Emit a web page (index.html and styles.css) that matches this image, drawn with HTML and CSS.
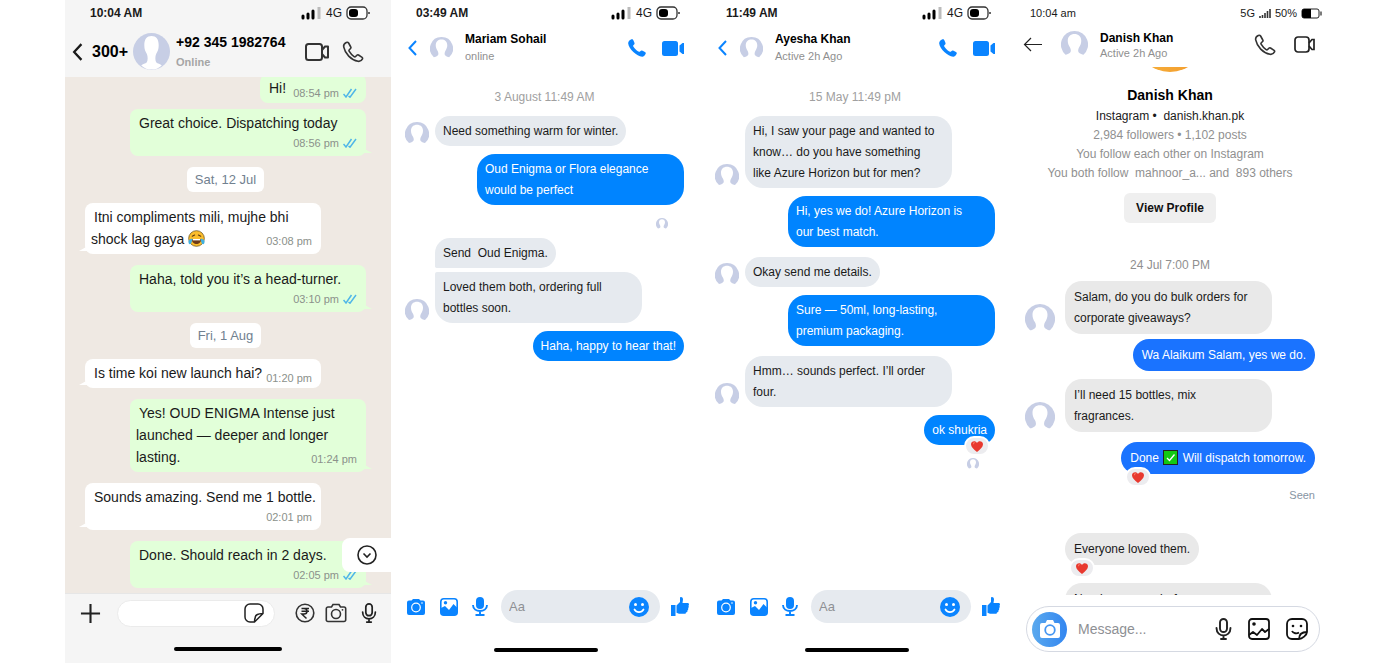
FILE: index.html
```html
<!DOCTYPE html>
<html lang="en">
<head>
    <meta charset="UTF-8">
    <meta name="viewport" content="width=device-width, initial-scale=1.0">
    <title>Customer chats</title>
    <link rel="stylesheet" href="styles.css">
</head>
<body>
    <svg class="sprite" aria-hidden="true">
        <symbol id="avatar" viewBox="0 0 36 36">
            <path fill="#c7cee5" d="M18 0A18 18 0 0 0 6 31.500c2 0 4-1 6-2.500 2-2 1-5 0-7-2-3-3-6-3-9 0-6 4-9 9-9s9 3 9 9c0 3-1 6-3 9-1 2-2 5 0 7 2 1.500 4 2.500 6 2.500A18 18 0 0 0 18 0z"/>
        </symbol>
        <symbol id="signal" viewBox="0 0 21 14">
            <path d="M2 10v2M7 8v4M12 5v7" stroke="#000" stroke-width="3" stroke-linecap="round"/>
            <path d="M18 1v12" stroke="#bbb" stroke-width="3"/>
        </symbol>
        <symbol id="battery" viewBox="0 0 25 14">
            <rect x="1" y="1" width="20" height="12" rx="4" fill="#fff" stroke="#333" stroke-width="1.3"/>
            <rect x="3" y="3" width="9" height="8" rx="3"/>
            <path d="M23 6v2" stroke="#333" stroke-width="1.5"/>
        </symbol>
        <symbol id="phone-line" viewBox="0 0 24 24">
            <path fill="none" stroke="#333" stroke-width="1.6" stroke-linejoin="round" d="M5.300 2.500c-1.700.8-3 2.300-2.600 4.400C4 13.500 10 20 17 21.300c2 .3 3.700-.8 4.500-2.400.3-.6.1-1.200-.4-1.600l-3.600-2.300c-.5-.3-1.100-.2-1.500.2l-1.400 1.300c-.4.400-1 .4-1.500.1-2-1.400-3.800-3.300-5-5.400-.3-.5-.2-1 .2-1.400L9.600 8.500c.4-.4.500-1 .2-1.500L7.600 3c-.5-.7-1.400-.9-2.300-.5z"/>
        </symbol>
        <symbol id="video-line" viewBox="0 0 26 20">
            <g fill="none" stroke="#333" stroke-width="2" stroke-linejoin="round">
                <rect x="2" y="2" width="16" height="16" rx="2.500"/>
                <path d="M18 8l3-3.500h3v11h-3L18 12"/>
            </g>
        </symbol>
        <symbol id="phone-solid" viewBox="0 0 18 18">
            <path fill="#0a84ff" d="M1 2C2 .7 3.500 0 4.600.2 5.200.4 6.600 3.800 6.600 4.500c0 .9-1.400 1.500-1.500 2.300-.1 1.300 4.500 6 6 6 .9 0 1.500-1.400 2.500-1.400.8 0 4 1.700 4.200 2.400.3 1-1.400 3.700-3.300 3.900C9.500 18.200.6 10 .2 4.600.1 3.600.4 2.700 1 2z"/>
        </symbol>
        <symbol id="video-solid" viewBox="0 0 22 15">
            <rect width="16" height="15" rx="2.500" fill="#0a84ff"/>
            <path fill="#0a84ff" d="M17.500 4.500L20.500 2H22v11h-1.500l-3-2.500z"/>
        </symbol>
        <symbol id="chevron" viewBox="0 0 9 16">
            <path d="M8 1L1.500 8 8 15" fill="none" stroke="currentColor" stroke-width="2"/>
        </symbol>
        <symbol id="ticks" viewBox="0 0 14 10">
            <path d="M.5 6L3 9l5.500-8M5.500 8L7 9.200 13 1" fill="none" stroke="#4fb6e8" stroke-width="1.500"/>
        </symbol>
        <symbol id="camera-solid" viewBox="0 0 18 16">
            <path fill="#0a84ff" d="M2 1.500h2.500L6 0h6l1.500 1.500H16a2 2 0 0 1 2 2V14a2 2 0 0 1-2 2H2a2 2 0 0 1-2-2V3.500a2 2 0 0 1 2-2z"/>
            <circle cx="9" cy="8.500" r="4.300" fill="none" stroke="#fff" stroke-width="1.200"/>
            <circle cx="15" cy="4" r=".8" fill="#fff"/>
        </symbol>
        <symbol id="image-solid" viewBox="0 0 18 18">
            <rect x=".8" y=".8" width="16.400" height="16.400" rx="3" fill="#fff" stroke="#0a84ff" stroke-width="1.600"/>
            <path fill="#0a84ff" d="M1 10l4-2 4 4 4.500-6L17 9.500V15a2 2 0 0 1-2 2H3a2 2 0 0 1-2-2z"/>
            <circle cx="5.500" cy="4.800" r="1.700" fill="#0a84ff"/>
        </symbol>
        <symbol id="mic-solid" viewBox="0 0 16 19">
            <rect x="4" width="8" height="12" rx="4" fill="#0a84ff"/>
            <path d="M1 8c0 8 14 8 14 0M8 14v4M3.500 18h9" fill="none" stroke="#0a84ff" stroke-width="1.900"/>
        </symbol>
        <symbol id="smile" viewBox="0 0 20 20">
            <circle cx="10" cy="10" r="10" fill="#0a84ff"/>
            <circle cx="6.500" cy="7.500" r="1.500" fill="#fff"/>
            <circle cx="13.500" cy="7.500" r="1.500" fill="#fff"/>
            <path d="M5.500 12.500c2 3.500 7 3.500 9 0" fill="none" stroke="#fff" stroke-width="1.700" stroke-linecap="round"/>
        </symbol>
        <symbol id="thumb" viewBox="0 0 18 19">
            <path fill="#0a84ff" d="M0 8h4.500v11H0zM5.500 8.500L9 5V1c0-1.500 3-1.300 3 1.500L11.500 6H17c1.300.5 1.200 2 .4 2.700.6.800.5 1.900-.3 2.400.4.900.1 1.800-.7 2.300.3 1-.2 2-1.400 2.100l-.5 1.200H8l-2.500-1z"/>
        </symbol>
        <symbol id="camera-line" viewBox="0 0 22 20">
            <g fill="none" stroke="#333" stroke-width="1.600">
                <path d="M3 4h3.500L8 1.500h6L15.500 4H19a1.700 1.700 0 0 1 1.700 1.700v11A1.700 1.700 0 0 1 19 18.500H3a1.700 1.700 0 0 1-1.700-1.800v-11A1.700 1.700 0 0 1 3 4z"/>
                <circle cx="11" cy="11" r="4.500"/>
            </g>
            <circle cx="17.500" cy="6.800" r=".9" fill="#333"/>
        </symbol>
        <symbol id="mic-line" viewBox="0 0 17 22">
            <g fill="none" stroke="#222" stroke-width="1.900" stroke-linecap="round">
                <rect x="5" y="1" width="7" height="13" rx="3.500"/>
                <path d="M1.500 10c0 10 14 10 14 0M8.500 17.500V21M6 21h5"/>
            </g>
        </symbol>
        <symbol id="heart" viewBox="0 0 12 11">
            <path fill="#e8392f" d="M6 11C2.500 8 0 6 0 3.200 0 0 4.500-1 6 2 7.500-1 12 0 12 3.200 12 6 9.500 8 6 11z"/>
            <path fill="#fb7b66" d="M2 2c.5-1 2-1 2.500-.3C3.500 1.900 2.500 2.500 2 4z"/>
        </symbol>
    </svg>

    <main class="phones">
        <section class="phone whatsapp">
            <header class="top">
                <div class="status">
                    <strong>10:04 AM</strong>
                    <svg class="signal"><use href="#signal"/></svg>
                    <span>4G</span>
                    <svg class="battery"><use href="#battery"/></svg>
                </div>
                <div class="contact">
                    <button class="back" aria-label="Back"><svg class="chevron"><use href="#chevron"/></svg></button>
                    <span class="unread">300+</span>
                    <svg class="photo" viewBox="0 0 36 36"><circle cx="18" cy="18" r="18" fill="#c7cee5"/><path fill="#fff" d="M18 3c4.500 0 7 3 7 9 0 4-1 6-2.500 8.500-1 2.500-1 6 0 8 1.500 1.500 4 1.500 5.500 3-6 5.500-14 5.500-20 0 1.500-1.500 4-1.500 5.500-3 1-2 1-5.500 0-8C12 18 11 16 11 12c0-6 2.500-9 7-9z"/></svg>
                    <div class="who">
                        <h2>+92 345 1982764</h2>
                        <p>Online</p>
                    </div>
                    <button aria-label="Video call"><svg class="video"><use href="#video-line"/></svg></button>
                    <button aria-label="Call"><svg class="call"><use href="#phone-line"/></svg></button>
                </div>
            </header>
            <div class="chat">
                <div class="bubble out short grouped">
                    <p>Hi!</p>
                    <time>08:54 pm <svg class="ticks"><use href="#ticks"/></svg></time>
                </div>
                <div class="bubble out">
                    <p>Great choice. Dispatching today</p>
                    <time>08:56 pm <svg class="ticks"><use href="#ticks"/></svg></time>
                </div>
                <div class="day">Sat, 12 Jul</div>
                <div class="bubble in tucked">
                    <p>Itni compliments mili, mujhe bhi<br>shock lag gaya
                        <svg class="emoji" viewBox="0 0 18 18" role="img" aria-label="Tears of joy">
                            <circle cx="9" cy="9" r="8.300" fill="#fbbd2c" stroke="#6b5523" stroke-width=".8"/>
                            <path d="M4.500 6.500l2.500-1.200M13.500 6.500L11 5.300" stroke="#5b3b12" stroke-width="1.200" stroke-linecap="round"/>
                            <path d="M4 9.500h10c0 7-10 7-10 0z" fill="#6d3a18"/>
                            <path d="M5 9.500h8v1.500H5z" fill="#fff"/>
                            <path d="M.5 12.500c0-2 2-3 4-3.500 0 3-1 6-2.500 6-1 0-1.500-1-1.500-2.500zM17.500 12.500c0-2-2-3-4-3.500 0 3 1 6 2.500 6 1 0 1.500-1 1.500-2.500z" fill="#3fb0e0"/>
                        </svg></p>
                    <time>03:08 pm</time>
                </div>
                <div class="bubble out">
                    <p>Haha, told you it’s a head-turner.</p>
                    <time>03:10 pm <svg class="ticks"><use href="#ticks"/></svg></time>
                </div>
                <div class="day">Fri, 1 Aug</div>
                <div class="bubble in inline">
                    <p>Is time koi new launch hai?</p>
                    <time>01:20 pm</time>
                </div>
                <div class="bubble out tucked">
                    <p>Yes! OUD ENIGMA Intense just<br>launched — deeper and longer<br>lasting.</p>
                    <time>01:24 pm</time>
                </div>
                <div class="bubble in">
                    <p>Sounds amazing. Send me 1 bottle.</p>
                    <time>02:01 pm</time>
                </div>
                <div class="bubble out">
                    <p>Done. Should reach in 2 days.</p>
                    <time>02:05 pm <svg class="ticks"><use href="#ticks"/></svg></time>
                </div>
                <button class="to-bottom" aria-label="Scroll to latest">
                    <svg viewBox="0 0 20 20"><circle cx="10" cy="10" r="9" fill="none" stroke="#222" stroke-width="1.600"/><path d="M6.500 8.500L10 12l3.500-3.500" fill="none" stroke="#222" stroke-width="1.600"/></svg>
                </button>
            </div>
            <footer class="bottom">
                <div class="composer">
                    <button aria-label="Attach"><svg class="plus" viewBox="0 0 22 22"><path d="M11 1v20M1 11h20" stroke="#222" stroke-width="2.200"/></svg></button>
                    <div class="field">
                        <input type="text" aria-label="Message">
                        <button aria-label="Stickers"><svg class="sticker" viewBox="0 0 20 20"><path d="M10.500 19H6a5 5 0 0 1-5-5V6a5 5 0 0 1 5-5h8a5 5 0 0 1 5 5v4.500zM10.500 19c0-2 .2-3.500.8-4.500M19 10.500c-4 .3-8 .5-8 5" fill="none" stroke="#222" stroke-width="1.500" stroke-linejoin="round"/></svg></button>
                    </div>
                    <button aria-label="Payment"><svg class="rupee" viewBox="0 0 20 20"><circle cx="10" cy="10" r="8.800" fill="none" stroke="#333" stroke-width="1.600"/><path d="M6.500 5.500h7.500M6.500 8.300h7.500M6.500 5.500h2.500c4 0 4 5.500 0 5.500H6.800l4.700 4.500" fill="none" stroke="#222" stroke-width="1.500"/></svg></button>
                    <button aria-label="Camera"><svg class="camera"><use href="#camera-line"/></svg></button>
                    <button aria-label="Voice message"><svg class="mic"><use href="#mic-line"/></svg></button>
                </div>
                <div class="home-bar"></div>
            </footer>
        </section>

        <section class="phone messenger">
            <header class="top">
                <div class="status">
                    <strong>03:49 AM</strong>
                    <svg class="signal"><use href="#signal"/></svg>
                    <span>4G</span>
                    <svg class="battery"><use href="#battery"/></svg>
                </div>
                <div class="contact">
                    <button class="back" aria-label="Back"><svg class="chevron"><use href="#chevron"/></svg></button>
                    <svg class="photo"><use href="#avatar"/></svg>
                    <div class="who">
                        <h2>Mariam Sohail</h2>
                        <p>online</p>
                    </div>
                    <button aria-label="Call"><svg class="call"><use href="#phone-solid"/></svg></button>
                    <button aria-label="Video call"><svg class="video"><use href="#video-solid"/></svg></button>
                </div>
            </header>
            <div class="chat">
                <div class="day">3 August 11:49 AM</div>
                <div class="row">
                    <svg class="avatar"><use href="#avatar"/></svg>
                    <p class="bubble in">Need something warm for winter.</p>
                </div>
                <p class="bubble out long">Oud Enigma or Flora elegance<br>would be perfect</p>
                <svg class="read-by"><use href="#avatar"/></svg>
                <div class="row">
                    <svg class="avatar"><use href="#avatar"/></svg>
                    <div class="stack">
                        <p class="bubble in first">Send&nbsp; Oud Enigma.</p>
                        <p class="bubble in long last">Loved them both, ordering full<br>bottles soon.</p>
                    </div>
                </div>
                <p class="bubble out">Haha, happy to hear that!</p>
            </div>
            <footer class="bottom">
                <div class="composer">
                    <button aria-label="Camera"><svg class="camera"><use href="#camera-solid"/></svg></button>
                    <button aria-label="Gallery"><svg class="image"><use href="#image-solid"/></svg></button>
                    <button aria-label="Voice message"><svg class="mic"><use href="#mic-solid"/></svg></button>
                    <div class="field">
                        <input type="text" placeholder="Aa" aria-label="Message">
                        <button aria-label="Emoji"><svg class="smile"><use href="#smile"/></svg></button>
                    </div>
                    <button aria-label="Like"><svg class="thumb"><use href="#thumb"/></svg></button>
                </div>
                <div class="home-bar"></div>
            </footer>
        </section>

        <section class="phone messenger">
            <header class="top">
                <div class="status">
                    <strong>11:49 AM</strong>
                    <svg class="signal"><use href="#signal"/></svg>
                    <span>4G</span>
                    <svg class="battery"><use href="#battery"/></svg>
                </div>
                <div class="contact">
                    <button class="back" aria-label="Back"><svg class="chevron"><use href="#chevron"/></svg></button>
                    <svg class="photo"><use href="#avatar"/></svg>
                    <div class="who">
                        <h2>Ayesha Khan</h2>
                        <p>Active 2h Ago</p>
                    </div>
                    <button aria-label="Call"><svg class="call"><use href="#phone-solid"/></svg></button>
                    <button aria-label="Video call"><svg class="video"><use href="#video-solid"/></svg></button>
                </div>
            </header>
            <div class="chat">
                <div class="day">15 May 11:49 pM</div>
                <div class="row">
                    <svg class="avatar"><use href="#avatar"/></svg>
                    <p class="bubble in long">Hi, I saw your page and wanted to<br>know… do you have something<br>like Azure Horizon but for men?</p>
                </div>
                <p class="bubble out long">Hi, yes we do! Azure Horizon is<br>our best match.</p>
                <div class="row">
                    <svg class="avatar"><use href="#avatar"/></svg>
                    <p class="bubble in">Okay send me details.</p>
                </div>
                <p class="bubble out long">Sure — 50ml, long-lasting,<br>premium packaging.</p>
                <div class="row">
                    <svg class="avatar"><use href="#avatar"/></svg>
                    <p class="bubble in long">Hmm… sounds perfect. I’ll order<br>four.</p>
                </div>
                <p class="bubble out">ok shukria<span class="reaction"><svg><use href="#heart"/></svg></span></p>
                <svg class="read-by"><use href="#avatar"/></svg>
            </div>
            <footer class="bottom">
                <div class="composer">
                    <button aria-label="Camera"><svg class="camera"><use href="#camera-solid"/></svg></button>
                    <button aria-label="Gallery"><svg class="image"><use href="#image-solid"/></svg></button>
                    <button aria-label="Voice message"><svg class="mic"><use href="#mic-solid"/></svg></button>
                    <div class="field">
                        <input type="text" placeholder="Aa" aria-label="Message">
                        <button aria-label="Emoji"><svg class="smile"><use href="#smile"/></svg></button>
                    </div>
                    <button aria-label="Like"><svg class="thumb"><use href="#thumb"/></svg></button>
                </div>
                <div class="home-bar"></div>
            </footer>
        </section>

        <section class="phone instagram">
            <header class="top">
                <div class="status">
                    <span class="clock">10:04 am</span>
                    <span>5G</span>
                    <svg class="signal" viewBox="0 0 12 10"><path d="M1 8v2M3.500 7v3M6 5v5M8.500 3v7M11 1v9" stroke="#333" stroke-width="1.600"/></svg>
                    <span>50%</span>
                    <svg class="battery" viewBox="0 0 21 11"><rect x="1" y="1" width="17" height="9" rx="2" fill="#fff" stroke="#222"/><path d="M1 3a2 2 0 0 1 2-2h7v9H3a2 2 0 0 1-2-2z"/><path d="M20 3.500v4" stroke="#222" stroke-width="1.200"/></svg>
                </div>
                <div class="contact">
                    <button class="back" aria-label="Back"><svg class="arrow" viewBox="0 0 19 15"><path d="M19 7.500H1.500M8 1L1.500 7.500 8 14" fill="none" stroke="#222" stroke-width="1.200"/></svg></button>
                    <svg class="photo"><use href="#avatar"/></svg>
                    <div class="who">
                        <h2>Danish Khan</h2>
                        <p>Active 2h Ago</p>
                    </div>
                    <button aria-label="Call"><svg class="call"><use href="#phone-line"/></svg></button>
                    <button aria-label="Video call"><svg class="video" viewBox="0 0 21 17"><g fill="none" stroke="#222" stroke-width="1.700"><rect x="1" y="1" width="14" height="15" rx="3"/><path d="M15 7l3-3.500h2v10h-2L15 10"/></g></svg></button>
                </div>
            </header>
            <div class="chat">
                <div class="profile">
                    <div class="profile-photo"></div>
                    <h1>Danish Khan</h1>
                    <p class="handle">Instagram •&nbsp; danish.khan.pk</p>
                    <p>2,984 followers • 1,102 posts</p>
                    <p>You follow each other on Instagram</p>
                    <p>You both follow&nbsp; mahnoor_a... and&nbsp; 893 others</p>
                    <button class="view-profile">View Profile</button>
                </div>
                <div class="day">24 Jul 7:00 PM</div>
                <div class="row">
                    <svg class="avatar"><use href="#avatar"/></svg>
                    <p class="bubble in long">Salam, do you do bulk orders for<br>corporate giveaways?</p>
                </div>
                <p class="bubble out">Wa Alaikum Salam, yes we do.</p>
                <div class="row">
                    <svg class="avatar"><use href="#avatar"/></svg>
                    <p class="bubble in long">I’ll need 15 bottles, mix<br>fragrances.</p>
                </div>
                <p class="bubble out spaced">Done
                    <svg class="done" viewBox="0 0 15 15" role="img" aria-label="Check mark"><rect x=".5" y=".5" width="14" height="14" fill="#12c912" stroke="#222"/><path d="M4 8l2.500 2.500 5-6" fill="none" stroke="#fff" stroke-width="1.300"/></svg>
                    Will dispatch tomorrow.<span class="reaction"><svg><use href="#heart"/></svg></span></p>
                <div class="seen">Seen</div>
                <div class="row"><p class="bubble in">Everyone loved them.<span class="reaction"><svg><use href="#heart"/></svg></span></p></div>
                <div class="row cut"><p class="bubble in long">Need one more before<br>Sunday.</p></div>
            </div>
            <footer class="bottom">
                <div class="composer">
                    <button class="snap" aria-label="Camera"><svg viewBox="0 0 22 20"><path fill="#fff" d="M3 4h3.500L8 1h6l1.500 3H19a2 2 0 0 1 2 2v11a2 2 0 0 1-2 2H3a2 2 0 0 1-2-2V6a2 2 0 0 1 2-2z"/><circle cx="11" cy="11" r="4.800" fill="none" stroke="#4596f2" stroke-width="1.800"/></svg></button>
                    <input type="text" placeholder="Message..." aria-label="Message">
                    <button aria-label="Voice message"><svg class="mic"><use href="#mic-line"/></svg></button>
                    <button aria-label="Gallery"><svg class="image" viewBox="0 0 22 22"><g fill="none" stroke="#111" stroke-width="1.800" stroke-linejoin="round"><rect x="1" y="1" width="20" height="20" rx="3"/><path d="M1 17l4-3 4 3 5-6 3 3 4-3"/></g><circle cx="6" cy="6" r="1.800" fill="#111"/></svg></button>
                    <button aria-label="Stickers"><svg class="image" viewBox="0 0 22 22"><path d="M13 21H6a5 5 0 0 1-5-5V6a5 5 0 0 1 5-5h10a5 5 0 0 1 5 5v8c-5 0-8 2-8 7zM13 21c3 0 8-4 8-7M6 13c1 2.500 5 3 7 1.500" fill="none" stroke="#111" stroke-width="1.800" stroke-linejoin="round"/><circle cx="7" cy="8" r="1.300" fill="#111"/><circle cx="15" cy="8" r="1.300" fill="#111"/></svg></button>
                </div>
            </footer>
        </section>
    </main>
</body>
</html>
```
FILE: styles.css
```css
* {
    box-sizing: border-box;
}
body {
    margin: 0;
    font-family: "Liberation Sans", Arial, sans-serif;
    font-size: 12px;
    color: #1a1a1a;
    background-color: #fff;
}
h1, h2, p {
    margin: 0;
}
button {
    display: flex;
    align-items: center;
    justify-content: center;
    padding: 0;
    border: none;
    background: none;
    font: inherit;
    color: inherit;
    cursor: pointer;
}
input {
    flex: 1;
    min-width: 0;
    padding: 0;
    border: none;
    outline: none;
    background: none;
    font: inherit;
}
input::placeholder {
    color: #8e9094;
}
svg {
    display: block;
    flex: none;
}
.sprite {
    position: absolute;
    width: 0;
    height: 0;
}
.phones {
    display: grid;
    grid-template-columns: 326fr 310fr 311fr 311fr;
    height: 100vh;
    padding: 0 77px 0 65px;
}
.phone {
    display: flex;
    flex-direction: column;
    min-width: 0;
    min-height: 0;
}
.status {
    display: flex;
    align-items: center;
    gap: 4px;
    height: 26px;
    padding: 0 20px 0 25px;
}
.status strong,
.status .clock {
    margin-right: auto;
}
.signal {
    width: 21px;
    height: 14px;
}
.battery {
    width: 25px;
    height: 14px;
}
.contact {
    display: flex;
    align-items: center;
}
.who {
    flex: 1;
    min-width: 0;
}
.who h2 {
    font-size: 12px;
    line-height: 17px;
    color: #000;
}
.who p {
    font-size: 11px;
    line-height: 17px;
    color: #8f8f8f;
}
.chat {
    position: relative;
    display: flex;
    flex: 1;
    flex-direction: column;
    min-height: 0;
    overflow: hidden;
}
.bubble {
    position: relative;
}
.in {
    align-self: flex-start;
}
.out {
    align-self: flex-end;
}
.composer,
.field {
    display: flex;
    align-items: center;
}
.field {
    flex: 1;
    min-width: 0;
}
.home-bar {
    width: 104px;
    height: 4px;
    margin: 0 auto;
    border-radius: 2px;
    background-color: #000;
}
.reaction {
    position: absolute;
    bottom: -13px;
    display: flex;
    align-items: center;
    justify-content: center;
    width: 26px;
    height: 20px;
    border: 2px solid #fff;
    border-radius: 10px;
    background-color: #ececef;
}
.reaction svg {
    width: 12px;
    height: 11px;
}

/* WhatsApp */
.whatsapp .top,
.whatsapp .bottom {
    background-color: #f5f5f5;
}
.whatsapp .top {
    height: 77px;
}
.whatsapp .contact {
    height: 51px;
    padding: 0 26px 0 7px;
}
.whatsapp .chevron {
    width: 11px;
    height: 18px;
}
.whatsapp .unread {
    margin: 0 5px 0 9px;
    font-size: 16px;
    font-weight: bold;
    color: #000;
}
.whatsapp .photo {
    width: 37px;
    height: 37px;
    margin-right: 6px;
}
.whatsapp .who h2 {
    font-size: 14px;
    line-height: 20px;
}
.whatsapp .who p {
    font-weight: bold;
    line-height: 20px;
    color: #a5a5a5;
}
.whatsapp .video {
    width: 26px;
    height: 20px;
}
.whatsapp .call {
    width: 24px;
    height: 24px;
    margin-left: 11px;
}
.whatsapp .chat {
    justify-content: flex-end;
    gap: 11px;
    padding: 0 25px 5px 20px;
    background-color: #efe9e3;
}
.whatsapp .bubble {
    display: flex;
    flex: none;
    flex-direction: column;
    width: 236px;
    padding: 3px 4px 4px 6px;
    border-radius: 8px;
    font-size: 14px;
    line-height: 22px;
}
.whatsapp .bubble p {
    text-indent: 3px;
}
.whatsapp .bubble time {
    display: flex;
    align-items: center;
    align-self: flex-end;
    gap: 4px;
    height: 18px;
    margin-right: 5px;
    font-size: 11px;
    color: #8b918b;
}
.whatsapp .in {
    background-color: #fff;
}
.whatsapp .out {
    background-color: #e2ffd9;
}
.whatsapp .bubble::after {
    content: "";
    position: absolute;
    bottom: 3px;
    border-top: 5px solid transparent;
}
.whatsapp .in::after {
    left: -6px;
    border-right: 9px solid #fff;
}
.whatsapp .out::after {
    right: -6px;
    border-left: 9px solid #e2ffd9;
}
.whatsapp .tucked time {
    margin-top: -18px;
}
.whatsapp .short,
.whatsapp .inline {
    flex-direction: row;
    align-items: flex-end;
    justify-content: space-between;
}
.whatsapp .short time,
.whatsapp .inline time {
    margin-bottom: -3px;
}
.whatsapp .short {
    width: 106px;
}
.whatsapp .grouped {
    margin-bottom: -5px;
}
.whatsapp .grouped::after {
    display: none;
}
.ticks {
    width: 14px;
    height: 10px;
}
.emoji {
    display: inline-block;
    width: 17px;
    height: 17px;
    vertical-align: -3px;
}
.whatsapp .day {
    flex: none;
    align-self: center;
    padding: 0 8px;
    border-radius: 6px;
    background-color: #fff;
    font-size: 13px;
    line-height: 25px;
    color: #718190;
}
.to-bottom {
    position: absolute;
    right: 0;
    bottom: 21px;
    width: 49px;
    height: 34px;
    border-radius: 8px 0 0 8px;
    background-color: #fff;
}
.to-bottom svg {
    width: 20px;
    height: 20px;
}
.whatsapp .bottom {
    height: 70px;
    border-top: 1px solid #e6e6e6;
}
.whatsapp .composer {
    height: 38px;
    margin-bottom: 15px;
    padding: 0 14px 0 15px;
}
.plus {
    width: 21px;
    height: 21px;
}
.whatsapp .field {
    height: 27px;
    margin: 0 20px 0 16px;
    padding: 0 10px;
    border: 1px solid #ebebeb;
    border-radius: 14px;
    background-color: #fff;
}
.sticker {
    width: 20px;
    height: 20px;
}
.rupee {
    width: 20px;
    height: 20px;
}
.whatsapp .camera {
    width: 22px;
    height: 20px;
    margin: 0 14px 0 10px;
}
.whatsapp .mic {
    width: 16px;
    height: 20px;
}
.whatsapp .home-bar {
    width: 108px;
}

/* Messenger */
.messenger .contact {
    height: 44px;
    padding: 0 17px;
}
.messenger .chevron {
    width: 9px;
    height: 16px;
    color: #0a84ff;
}
.messenger .photo {
    width: 23px;
    height: 23px;
    margin: 0 12px 0 13px;
}
.messenger .call {
    width: 18px;
    height: 18px;
}
.messenger .video {
    width: 22px;
    height: 15px;
    margin-left: 16px;
}
.messenger .chat {
    gap: 8px;
    padding: 18px 17px 0 14px;
}
.messenger .day {
    margin-bottom: 2px;
    line-height: 18px;
    text-align: center;
    color: #a0a0a0;
}
.row {
    display: flex;
    align-items: flex-end;
}
.avatar {
    width: 24px;
    height: 24px;
    margin-right: 6px;
}
.messenger .out + .row {
    margin-top: 2px;
}
.messenger .bubble {
    padding: 5px 8px 4px;
    border-radius: 18px;
    line-height: 21px;
}
.messenger .long {
    width: 207px;
}
.messenger .in {
    background-color: #e6eaef;
}
.messenger .out {
    background-color: #0084ff;
    color: #fff;
}
.stack {
    display: flex;
    flex-direction: column;
    gap: 4px;
}
.messenger .first {
    border-bottom-left-radius: 2px;
}
.messenger .last {
    border-top-left-radius: 2px;
}
.read-by {
    align-self: flex-end;
    width: 12px;
    height: 12px;
    margin: 5px 16px 0 0;
}
.messenger .reaction {
    right: 5px;
    bottom: -11px;
}
.messenger .bottom {
    height: 75px;
}
.messenger .composer {
    height: 37px;
    margin-bottom: 23px;
    padding: 0 12px 0 16px;
}
.messenger .camera {
    width: 18px;
    height: 16px;
}
.messenger .image {
    width: 18px;
    height: 18px;
    margin: 0 14px 0 15px;
}
.messenger .mic {
    width: 16px;
    height: 19px;
}
.messenger .field {
    height: 33px;
    margin: 0 11px 0 13px;
    padding: 0 11px 0 8px;
    border-radius: 17px;
    background-color: #e6eaef;
    font-size: 13px;
}
.smile {
    width: 20px;
    height: 20px;
}
.thumb {
    width: 18px;
    height: 19px;
}

/* Instagram */
.instagram .status {
    padding: 0 1px 0 18px;
    font-size: 11px;
}
.instagram .signal {
    width: 12px;
    height: 10px;
}
.instagram .battery {
    width: 21px;
    height: 11px;
}
.instagram .contact {
    height: 41px;
    padding: 0 8px 4px 11px;
}
.arrow {
    width: 19px;
    height: 15px;
}
.instagram .photo {
    width: 27px;
    height: 27px;
    margin: 0 12px 0 19px;
}
.instagram .who p {
    line-height: 12px;
}
.instagram .call {
    width: 24px;
    height: 24px;
}
.instagram .video {
    width: 21px;
    height: 17px;
    margin-left: 17px;
}
.instagram .chat {
    padding: 0 8px 0 13px;
}
.profile {
    display: flex;
    flex-direction: column;
    align-items: center;
    color: #909090;
    line-height: 19px;
}
.profile-photo {
    width: 70px;
    height: 70px;
    margin-top: -65px;
    border-radius: 50%;
    background: linear-gradient(to right, #f6b13c, #f39a2b);
}
.profile h1 {
    margin: 13px 0 2px;
    font-size: 14px;
    line-height: 20px;
    color: #000;
}
.profile .handle {
    color: #1a1a1a;
}
.view-profile {
    height: 30px;
    margin-top: 10px;
    padding: 0 12px;
    border-radius: 6px;
    background-color: #efefef;
    font-weight: bold;
    color: #111;
}
.instagram .day {
    margin: 33px 0 7px;
    line-height: 18px;
    text-align: center;
    color: #8f8f8f;
}
.instagram .row {
    flex: none;
}
.instagram .avatar {
    width: 30px;
    height: 30px;
    margin-right: 10px;
}
.instagram .bubble {
    padding: 6px 9px 5px;
    border-radius: 17px;
    line-height: 21px;
}
.instagram .long {
    width: 207px;
}
.instagram .row .bubble:first-child {
    margin-left: 40px;
}
.instagram .in {
    background-color: #e9e9e9;
}
.instagram .out {
    margin: 5px 0 8px;
    background-color: #1a73ff;
    color: #fff;
}
.instagram .spaced {
    margin-top: 10px;
}
.done {
    display: inline-block;
    width: 15px;
    height: 15px;
    margin: 0 1px;
    vertical-align: -3px;
}
.instagram .reaction {
    left: 4px;
}
.seen {
    margin: 4px 0 29px;
    font-size: 11px;
    line-height: 18px;
    text-align: right;
    color: #8795a3;
}
.cut {
    margin-top: 18px;
}
.instagram .bottom {
    padding: 11px 3px 11px 14px;
}
.instagram .composer {
    height: 46px;
    padding: 0 11px 0 5px;
    border: 1px solid #d5d9e2;
    border-radius: 23px;
}
.snap {
    width: 35px;
    height: 35px;
    border-radius: 50%;
    background: linear-gradient(to right, #5aa9ee, #3386f0);
}
.snap svg {
    width: 22px;
    height: 20px;
}
.instagram input {
    margin-left: 11px;
    font-size: 14px;
}
.instagram .mic {
    width: 17px;
    height: 22px;
}
.instagram .image {
    width: 22px;
    height: 22px;
    margin-left: 16px;
}
```
